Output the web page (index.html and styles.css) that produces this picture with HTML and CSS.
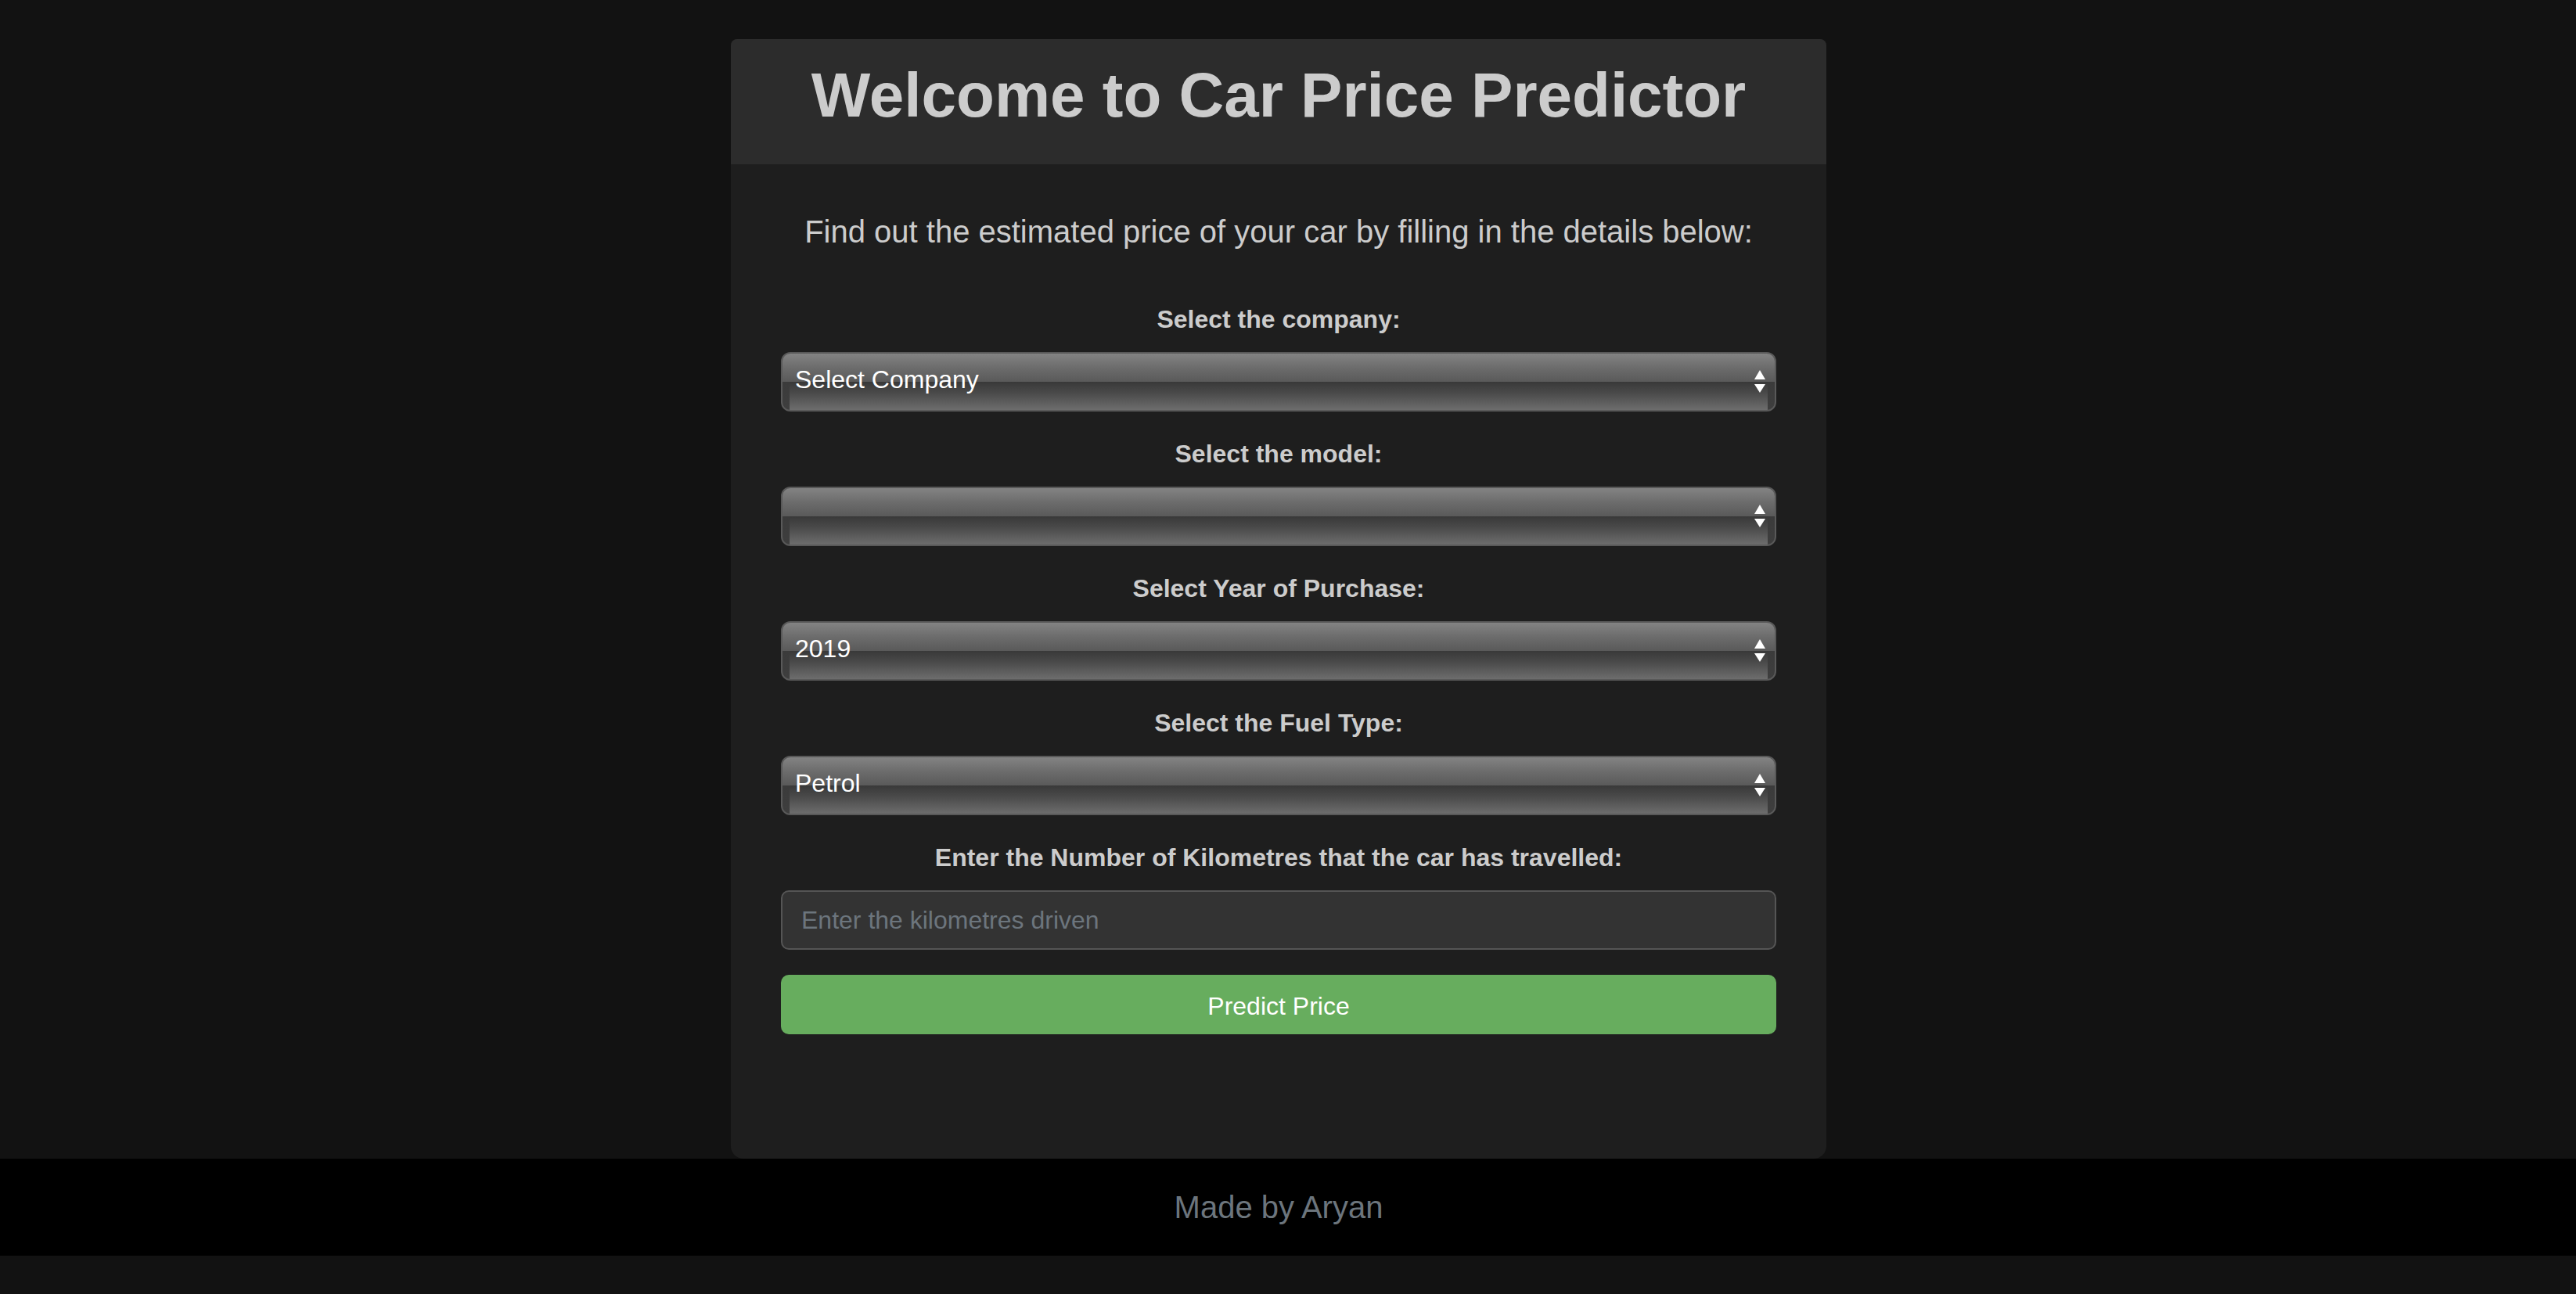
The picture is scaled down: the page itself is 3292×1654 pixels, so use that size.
FILE: index.html
```html
<!DOCTYPE html>
<html lang="en">
<head>
<meta charset="utf-8">
<title>Car Price Predictor</title>
<link rel="stylesheet" href="styles.css">
</head>
<body>
<main class="page">
  <section class="card">
    <header class="card-header">
      <h1 class="title">Welcome to Car Price Predictor</h1>
    </header>
    <div class="card-body">
      <p class="subtitle">Find out the estimated price of your car by filling in the details below:</p>
      <form class="form">
        <div class="field">
          <label class="label" for="company">Select the company:</label>
          <div class="select-wrap">
            <select id="company" class="select"><option>Select Company</option></select>
            <svg class="arrows" width="14" height="29" viewBox="0 0 14 29"><polygon points="0,12 7,0 14,12" fill="#fff"/><polygon points="0,18 14,18 7,29" fill="#fff"/></svg>
          </div>
        </div>
        <div class="field">
          <label class="label" for="model">Select the model:</label>
          <div class="select-wrap">
            <select id="model" class="select"><option></option></select>
            <svg class="arrows" width="14" height="29" viewBox="0 0 14 29"><polygon points="0,12 7,0 14,12" fill="#fff"/><polygon points="0,18 14,18 7,29" fill="#fff"/></svg>
          </div>
        </div>
        <div class="field">
          <label class="label" for="year">Select Year of Purchase:</label>
          <div class="select-wrap">
            <select id="year" class="select"><option>2019</option></select>
            <svg class="arrows" width="14" height="29" viewBox="0 0 14 29"><polygon points="0,12 7,0 14,12" fill="#fff"/><polygon points="0,18 14,18 7,29" fill="#fff"/></svg>
          </div>
        </div>
        <div class="field">
          <label class="label" for="fuel">Select the Fuel Type:</label>
          <div class="select-wrap">
            <select id="fuel" class="select"><option>Petrol</option></select>
            <svg class="arrows" width="14" height="29" viewBox="0 0 14 29"><polygon points="0,12 7,0 14,12" fill="#fff"/><polygon points="0,18 14,18 7,29" fill="#fff"/></svg>
          </div>
        </div>
        <div class="field field-last">
          <label class="label" for="kms">Enter the Number of Kilometres that the car has travelled:</label>
          <input id="kms" class="input" type="text" placeholder="Enter the kilometres driven">
        </div>
        <button type="button" class="button">Predict Price</button>
      </form>
    </div>
  </section>
</main>
<footer class="footer">Made by Aryan</footer>
</body>
</html>
```
FILE: styles.css
```css
* { box-sizing: border-box; }

html, body {
  margin: 0;
  padding: 0;
}

body {
  background: #121212;
  font-family: "Liberation Sans", Arial, Helvetica, sans-serif;
  color: #cccccc;
}

.page {
  padding: 50px 24px 0 0;
  display: flex;
  justify-content: center;
}

.card {
  width: 1400px;
  background: #1e1e1e;
  border-radius: 8px 8px 16px 16px;
  overflow: hidden;
}

.card-header {
  background: #2c2c2c;
  padding: 24px 0 40px;
  text-align: center;
}

.title {
  margin: 0;
  font-size: 80px;
  line-height: 96px;
  font-weight: 700;
  color: #cccccc;
}

.card-body {
  padding: 56px 64px 159px;
}

.subtitle {
  margin: 0 0 57px;
  font-size: 40px;
  line-height: 60px;
  text-align: center;
  color: #cccccc;
}

.form {
  display: flex;
  flex-direction: column;
}

.field {
  display: flex;
  flex-direction: column;
  margin-bottom: 29px;
}

.field-last {
  margin-bottom: 32px;
}

.label {
  display: block;
  text-align: center;
  font-size: 32px;
  line-height: 50px;
  font-weight: 700;
  color: #cccccc;
  margin-bottom: 17px;
}

.select-wrap {
  position: relative;
}

.select {
  -webkit-appearance: none;
  appearance: none;
  display: block;
  width: 100%;
  height: 76px;
  margin: 0;
  padding: 0 50px 6px 16px;
  border: 2px solid #595959;
  border-radius: 12px;
  color: #ffffff;
  font-family: "Liberation Sans", Arial, Helvetica, sans-serif;
  font-size: 32px;
  background:
    linear-gradient(to bottom, rgba(0,0,0,0) 50%, #3b3b3b 50%, #3e3e3e 100%) left top / 9px 100% no-repeat,
    linear-gradient(to bottom, rgba(0,0,0,0) 50%, #3b3b3b 50%, #3e3e3e 100%) right top / 9px 100% no-repeat,
    linear-gradient(to bottom, #838383 0%, #6c6c6c 25%, #5a5a5a 49.5%, #393939 50.5%, #4a4a4a 70%, #6d6d6d 100%);
  outline: none;
}

.arrows {
  position: absolute;
  right: 14px;
  top: 23px;
  display: block;
}

.input {
  display: block;
  width: 100%;
  height: 76px;
  margin: 0;
  padding: 0 24px;
  background: #333333;
  border: 2px solid #555555;
  border-radius: 10px;
  color: #ffffff;
  font-family: "Liberation Sans", Arial, Helvetica, sans-serif;
  font-size: 32px;
  outline: none;
}

.input::placeholder {
  color: #6c757d;
}

.button {
  display: block;
  width: 100%;
  height: 76px;
  margin: 0;
  padding: 4px 0 0;
  border: none;
  border-radius: 10px;
  background: #67ad5e;
  color: #ffffff;
  font-family: "Liberation Sans", Arial, Helvetica, sans-serif;
  font-size: 32px;
  cursor: pointer;
}

.footer {
  background: #000000;
  color: #6c757d;
  font-size: 40px;
  line-height: 60px;
  padding: 32px 24px 32px 0;
  text-align: center;
}
```
